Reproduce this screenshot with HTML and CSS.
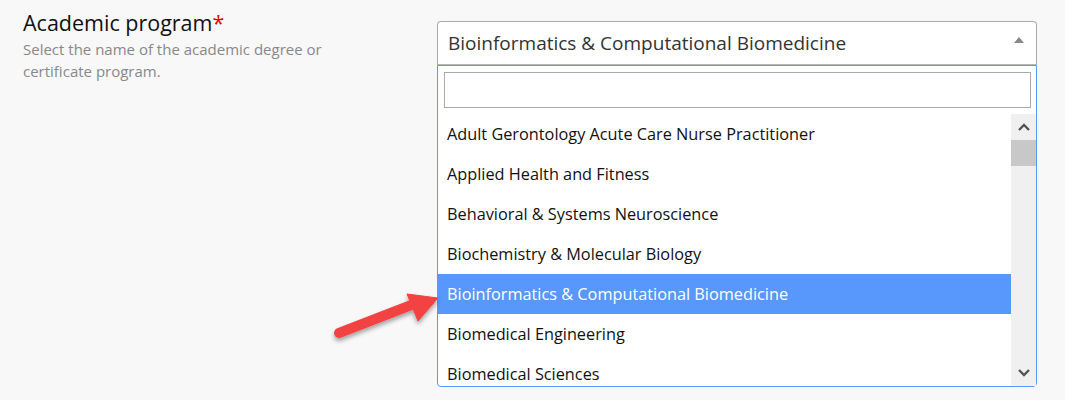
FILE: index.html
```html
<!DOCTYPE html>
<html>
<head>
<meta charset="utf-8">
<title>Academic program</title>
<link rel="stylesheet" href="styles.css">
</head>
<body>

<div class="field">
	<div class="field-info">
		<div class="label">Academic program<span class="req">*</span></div>
		<div class="help">Select the name of the academic degree or certificate program.</div>
	</div>

	<div class="select">
		<div class="select-box">
			<span class="value">Bioinformatics &amp; Computational Biomedicine</span>
			<span class="caret"></span>
		</div>
		<div class="dropdown">
			<div class="search"><input type="text"></div>
			<div class="results">
				<ul class="options">
					<li>Adult Gerontology Acute Care Nurse Practitioner</li>
					<li>Applied Health and Fitness</li>
					<li>Behavioral &amp; Systems Neuroscience</li>
					<li>Biochemistry &amp; Molecular Biology</li>
					<li class="hl">Bioinformatics &amp; Computational Biomedicine</li>
					<li>Biomedical Engineering</li>
					<li>Biomedical Sciences</li>
				</ul>
				<div class="scrollbar">
					<div class="sb-btn">
						<svg width="12" height="8" viewBox="0 0 12 8"><path d="M1 7 L6 2 L11 7" fill="none" stroke="#555" stroke-width="2.4"/></svg>
					</div>
					<div class="sb-thumb"></div>
					<div class="sb-track"></div>
					<div class="sb-btn">
						<svg width="12" height="8" viewBox="0 0 12 8"><path d="M1 1 L6 6 L11 1" fill="none" stroke="#555" stroke-width="2.4"/></svg>
					</div>
				</div>
			</div>
		</div>
	</div>
</div>

<svg class="pointer" width="120" height="70" viewBox="0 0 120 70">
	<defs>
		<filter id="sh" x="-20%" y="-20%" width="140%" height="160%">
			<feDropShadow dx="0" dy="3" stdDeviation="2" flood-color="#000" flood-opacity="0.35"/>
		</filter>
	</defs>
	<g filter="url(#sh)" fill="#f24343" stroke="#f24343">
		<line x1="9" y1="53" x2="84" y2="24" stroke-width="10" stroke-linecap="round"/>
		<polygon points="77,14 108,18 88,41" stroke-width="1" stroke-linejoin="round"/>
	</g>
</svg>

</body>
</html>
```

FILE: styles.css
```css
body {
	margin: 0;
	background-color: #f8f8f8;
	font-family: "Open Sans", "Liberation Sans", sans-serif;
	color: #111;
}
.field {
	display: flex;
	padding: 8px 0 0 23px;
}
.field-info {
	width: 414px;
}
.label {
	font-size: 21.5px;
	line-height: 30px;
	color: #111;
}
.req {
	color: #e00;
}
.help {
	width: 320px;
	font-size: 15px;
	line-height: 22px;
	color: #888;
}
.select {
	width: 600px;
	margin-top: 13px;
}
.select-box {
	height: 44px;
	box-sizing: border-box;
	border: 1px solid #aaa;
	border-bottom-color: #b6b6b6;
	border-radius: 4px 4px 0 0;
	background-color: #fff;
	display: flex;
	align-items: center;
	padding: 0 12px 0 10px;
}
.select-box .value {
	flex: 1;
	font-size: 19px;
	color: #333;
}
.caret {
	width: 0;
	height: 0;
	border-left: 5px solid transparent;
	border-right: 5px solid transparent;
	border-bottom: 6px solid #888;
	margin-bottom: 6px;
}
.dropdown {
	border: 1px solid #5897fb;
	border-radius: 0 0 4px 4px;
	background-color: #fff;
}
.search {
	padding: 6px 5px 6px 6px;
}
.search input {
	display: block;
	width: 100%;
	height: 36px;
	box-sizing: border-box;
	border: 1px solid #aaa;
	margin: 0;
	font: inherit;
}
.results {
	display: flex;
	height: 272px;
	overflow: hidden;
}
.options {
	flex: 1;
	list-style: none;
	margin: 0;
	padding: 0;
}
.options li {
	height: 40px;
	line-height: 41px;
	padding-left: 9px;
	font-size: 16.3px;
	color: #111;
}
.options li.hl {
	background-color: #5897fb;
	color: #fff;
}
.scrollbar {
	width: 25px;
	background-color: #f0f0f0;
	display: flex;
	flex-direction: column;
}
.sb-btn {
	height: 26px;
	display: flex;
	align-items: center;
	justify-content: center;
}
.sb-thumb {
	height: 26px;
	background-color: #c8c8c8;
}
.sb-track {
	flex: 1;
}
.pointer {
	position: absolute;
	left: 330px;
	top: 280px;
}
```
